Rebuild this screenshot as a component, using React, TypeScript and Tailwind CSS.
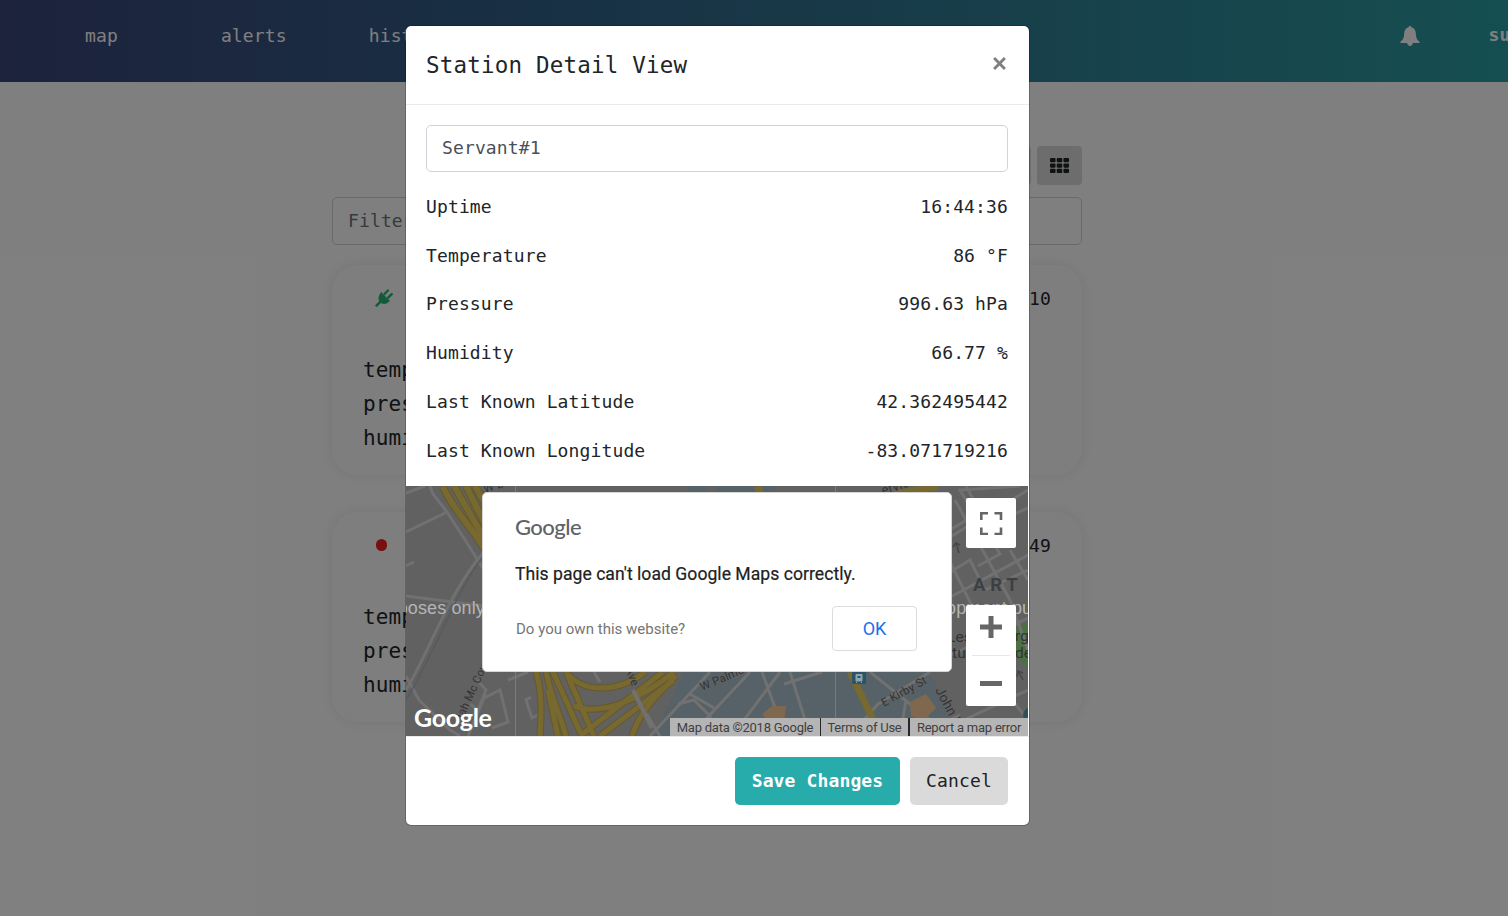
import React from "react";
import { FaTh, FaListUl } from "react-icons/fa";

const readings: [string, string][] = [
  ["Uptime", "16:44:36"],
  ["Temperature", "86 °F"],
  ["Pressure", "996.63 hPa"],
  ["Humidity", "66.77 %"],
  ["Last Known Latitude", "42.362495442"],
  ["Last Known Longitude", "-83.071719216"],
];

function BellIcon() {
  return (
    <svg className="mt-1 ml-[954px] size-5 shrink-0" viewBox="0 0 20 20" fill="currentColor">
      <path d="M10 0C9 0 8.6.6 8.6 1.3C6 2 4.4 4 4.2 7C4 11 3.5 13.5.6 15.5C.1 16 .3 17 1 17H7.2C7.4 19 8.6 20 10 20S12.6 19 12.8 17H19C19.7 17 19.9 16 19.4 15.5C16.5 13.5 16 11 15.8 7C15.6 4 14 2 11.4 1.3C11.4.6 11 0 10 0Z" />
    </svg>
  );
}

function PlugIcon() {
  return (
    <svg className="size-[18px] text-[#27b575]" viewBox="0 0 18 18" fill="currentColor" stroke="currentColor" strokeLinecap="round">
      <path d="M9.5 5L12.9 1.5M13.2 8.7L16.7 5.2M1.5 16.6L5.5 12.6" strokeWidth="2.4" />
      <path d="M6.3 3.8L14.4 11.9C12.3 14.6 8.6 15 6 13.6C3.4 11.8 3 7.2 6.3 3.8Z" strokeWidth="1" strokeLinejoin="round" />
    </svg>
  );
}

function NavBar() {
  return (
    <nav className="flex h-[82px] items-start bg-linear-to-r from-[#3a457a] via-[#305f88] via-30% to-[#28aaa6] pt-[22px] text-white">
      <span className="ml-[85px] leading-7">map</span>
      <span className="ml-[103px] leading-7">alerts</span>
      <span className="ml-[82px] leading-7">history</span>
      <BellIcon />
      <span className="ml-[69px] leading-[26px] font-bold">superuser</span>
    </nav>
  );
}

function StationCard({ online, time }: { online: boolean; time: string }) {
  return (
    <section className="h-[210px] rounded-[26px] bg-[#fdfdfd] pt-[19px] pr-[31px] pl-[31px] shadow-[0_0_14px_rgba(0,0,0,0.09)]">
      <div className="flex h-7 items-center justify-between">
        <span className="flex w-[42px] justify-center">
          {online ? <PlugIcon /> : <span className="mr-[6px] h-3 w-[11px] rounded-full bg-[#f02020]" />}
        </span>
        <span>{time}</span>
      </div>
      <div className="mt-[41px] text-[21px] leading-[34px]">
        <p>temperature</p>
        <p>pressure</p>
        <p>humidity</p>
      </div>
    </section>
  );
}

function MapDrawing() {
  return (
    <svg className="block h-[250px] w-[622px]" viewBox="406 486 622 250" fill="none">
      <rect x="406" y="486" width="622" height="250" fill="#616161" />
      <path d="M655 736L683 672H928L946 700L952 736ZM688 486L706 486V494H688ZM715 486H775V494H715Z" fill="#566268" />
      <path d="M1010 632L1028 622V670L1016 655Z" fill="#4d7043" />
      <path d="M950 736L975 715L1000 722L1010 736Z" fill="#566268" />
      <g stroke="#717171" strokeWidth="3">
        <path d="M406 493L425 486M406 532L447 512L433 494L430 486M447 512L467 543L484 570M406 566L414 562M406 596L484 606M484 552C450 590 430 650 406 690" />
        <path d="M406 676L419 700L450 730L460 736M468 736L484 698L500 690L508 722L492 728M477 680L486 690L478 710L470 704M508 680L528 672M531 697L526 700L532 718L542 713M594 672L600 682" />
        <path d="M643 708L660 736M650 736L710 672M690 736L750 672M678 704L694 700L710 716V736M690 694L714 708M732 736L780 672M762 672L776 710M790 672L810 736M784 684L822 672M850 736L878 704L930 672M870 672L950 736M906 700L900 736M930 736L1028 690M918 736L960 715" />
        <path d="M945 540L1028 490M945 600L1028 555M945 658L1028 618M955 500L1010 600M944 550L984 630M966 486L998 545M950 530L975 515L960 490L1020 486M1010 550L1028 580M1000 520L1028 508M978 566L1000 554L990 538M944 576L970 560L985 590L1028 570M1010 600L1028 650M990 672L1028 720" />
      </g>
      <path d="M484 555C455 592 437 650 406 700" stroke="#555b61" strokeWidth="1.5" />
      <g strokeLinejoin="round">
        <path d="M443 487C455 512 466 520 484 548M454 486L485 540M466 486L486 526M475 486L486 505" stroke="#66592a" strokeWidth="8" />
        <path d="M443 487C455 512 466 520 484 548M454 486L485 540M466 486L486 526M475 486L486 505" stroke="#786930" strokeWidth="6" />
        <path d="M536 672C543 695 541 718 540 736M546 672C552 700 562 720 566 736M553 672L582 736M566 672L594 736M568 674C585 694 620 692 645 672M574 706C602 717 642 698 674 672M580 736L663 672M600 736L674 680M632 736C640 710 660 692 676 676M558 736L548 690" stroke="#66592a" strokeWidth="7" />
        <path d="M536 672C543 695 541 718 540 736M546 672C552 700 562 720 566 736M553 672L582 736M566 672L594 736M568 674C585 694 620 692 645 672M574 706C602 717 642 698 674 672M580 736L663 672M600 736L674 680M632 736C640 710 660 692 676 676M558 736L548 690" stroke="#786930" strokeWidth="5" />
        <path d="M757 486L762 496M850 672L881 736M886 496L938 486" stroke="#786930" strokeWidth="7" />
      </g>
      <path d="M633 690L652 728" stroke="#717171" strokeWidth="4" />
      <path d="M772 706L786 706L784 724L774 730L762 714ZM910 702L926 694L936 708L922 722L911 716Z" fill="#80684e" />
      <path d="M515.5 486V736M835.5 486V736" stroke="#7b7b7b" />
      <g fill="#333" stroke="#656565" strokeWidth="1" paintOrder="stroke" fontFamily="Roboto, sans-serif" fontSize="11.5">
        <text transform="translate(485 493) rotate(-18)">W Boston</text>
        <text transform="translate(883 495) rotate(-18)" fontSize="13">ervice</text>
        <text transform="translate(463 719) rotate(-65)">iah Mc Coy Dr</text>
        <text transform="translate(625 669) rotate(68)">Ave</text>
        <text transform="translate(702 691) rotate(-23)">W Palmer</text>
        <text transform="translate(884 707) rotate(-29)">E Kirby St</text>
        <text transform="translate(935 690) rotate(62)" fontSize="13.5">John R St</text>
        <text x="947" y="642" fontSize="15.5" strokeWidth="0">Leslie</text>
        <text x="952" y="658" fontSize="15.5" strokeWidth="0">tude</text>
        <text x="1015" y="641" fontSize="15.5" strokeWidth="0">rge</text>
        <text x="1015" y="658" fontSize="15.5" strokeWidth="0">de</text>
        <text x="973" y="590.5" fontSize="18.5" fontWeight="700" letterSpacing="4.8" fill="#3c4045">ART</text>
      </g>
      <g fill="#b5b5b5" fontFamily="'Liberation Sans', sans-serif" fontSize="18">
        <text x="485" y="614" textAnchor="end">purposes only</text>
        <text x="946" y="614">opment purposes</text>
      </g>
      <path d="M959 553L956 543M953 547L956 543L960 545M1023 680L1018 671M1017 677L1018 671L1023 673" stroke="#464646" strokeWidth="1.5" />
      <rect x="852" y="671" width="14" height="13" rx="1" fill="#2b5566" />
      <path d="M856 674.5H862V681H856ZM857 682L856 683M861 682L862 683" fill="#8ca5ae" stroke="#8ca5ae" />
      <path d="M857.5 676H860.5V678H857.5Z" fill="#2b5566" />
      <circle cx="1030" cy="715" r="7" fill="#2b5357" />
      <text x="805" y="739" fill="#50565a" fontFamily="Roboto, sans-serif" fontWeight="500" fontSize="19">Wayne State</text>
    </svg>
  );
}

function MapDialog() {
  return (
    <div className="absolute top-[6px] left-[76px] h-[180px] w-[470px] rounded-[5px] border border-[#d5d5d5] bg-white px-8 font-['Roboto',sans-serif] tracking-normal">
      <p className="mt-5 font-['Lato',sans-serif] text-[22px] leading-7 font-medium tracking-[-0.55px] text-[#5f6368]">Google</p>
      <p className="mt-[21px] text-[17.6px] leading-6 tracking-[0.02px] whitespace-nowrap text-[#212121] [-webkit-text-stroke:0.2px_#212121]">
        This page can't load Google Maps correctly.
      </p>
      <div className="mt-5 flex items-center justify-between">
        <span className="mt-[2px] ml-px text-[15px] tracking-[0.02px] text-[#757575]">Do you own this website?</span>
        <button className="mr-[2px] h-[45px] w-[85px] rounded-[4px] border border-[#dadce0] text-[18px] text-[#1a73e8]">OK</button>
      </div>
    </div>
  );
}

function StationMap() {
  return (
    <div className="relative mt-[11px] h-[250px] w-[622px] overflow-hidden">
      <MapDrawing />
      <span className="absolute bottom-px left-2 font-['Lato',sans-serif] text-[25px] leading-[36px] font-bold tracking-[-0.3px] text-white">Google</span>
      <div className="absolute right-0 bottom-0 flex h-[18px] gap-px bg-[#25282b] font-['Roboto',sans-serif] text-[13px] leading-[19px] tracking-[-0.24px] whitespace-nowrap text-[#3f3f3f]">
        <span className="w-[150px] bg-[#bdbdbd]/95 text-center">Map data ©2018 Google</span>
        <span className="w-[87px] bg-[#bdbdbd]/95 text-center">Terms of Use</span>
        <span className="ml-px w-[118px] bg-[#bdbdbd]/95 text-center">Report a map error</span>
      </div>
      <div className="absolute top-3 right-3 flex size-[50px] items-center justify-center rounded-[2px] bg-white">
        <svg className="h-6 w-6 text-[#666]" viewBox="0 0 24 24" fill="none" stroke="currentColor" strokeWidth="2.6">
          <path d="M2.3 9V2.3H9M15.5 2.3H22V9M22 16.5V23H15.5M9 23H2.3V16.5" />
        </svg>
      </div>
      <div className="absolute top-[119px] right-3 flex h-[101px] w-[50px] flex-col items-center rounded-[2px] bg-white text-[#666]">
        <svg className="mt-[11px] size-[22px]" viewBox="0 0 22 22" stroke="currentColor" strokeWidth="5">
          <path d="M0 11H22M11 0V22" />
        </svg>
        <hr className="mt-[17px] w-[38px] border-[#e6e6e6]" />
        <svg className="mt-[25px] h-[5px] w-[22px]" viewBox="0 0 22 5">
          <path d="M0 0H22V5H0Z" fill="currentColor" />
        </svg>
      </div>
      <MapDialog />
    </div>
  );
}

export default function App() {
  return (
    <div className="relative h-[916px] w-full overflow-hidden bg-white font-['DejaVu_Sans_Mono',monospace] text-[18px] tracking-[0.13px] text-[#212529]">
      <div className="w-[1700px]">
        <NavBar />
        <main className="ml-[332px] flex w-[750px] flex-col pt-16">
          <div className="flex justify-end gap-[6px]">
            <span className="flex h-[39px] w-[45px] items-center justify-center rounded-[4px] bg-[#dadada]">
              <FaListUl className="size-[18px]" />
            </span>
            <span className="flex h-[39px] w-[45px] items-center justify-center rounded-[4px] bg-[#dadada]">
              <FaTh className="h-[17px] w-[19px]" preserveAspectRatio="none" />
            </span>
          </div>
          <div className="mt-3 flex h-12 items-center rounded-[5px] border border-[#ced4da] px-[15px] pb-[2px] text-[#6c757d]">Filter stations</div>
          <div className="mt-5 flex flex-col gap-[37px]">
            <StationCard online time="16:44:10" />
            <StationCard online={false} time="16:43:49" />
          </div>
        </main>
      </div>

      <div className="absolute inset-0 bg-black/50 pt-[25px] pl-[405px]">
        <div className="w-[625px] rounded-[6px] border border-black/20 bg-white bg-clip-padding">
          <header className="flex h-[79px] justify-between border-b border-[#e9ecef] pr-[21px] pl-5">
            <h1 className="pt-5 text-[22.5px] leading-[38px] tracking-[0.2px]">Station Detail View</h1>
            <button className="flex h-[74px] w-[17px] items-center justify-center" aria-label="Close">
              <svg className="size-[13px]" viewBox="0 0 12 12" stroke="#7f7f7f" strokeWidth="2.6">
                <path d="M1 1L11 11M11 1L1 11" />
              </svg>
            </button>
          </header>
          <div className="pt-5 pr-[21px] pl-5">
            <div className="flex h-[47px] items-center rounded-[5px] border border-[#ced4da] px-[15px] pb-[2px] text-[#495057]">Servant#1</div>
            <dl className="pt-[10px]">
              {readings.map(([label, value]) => (
                <div key={label} className="flex h-[48.8px] items-center justify-between">
                  <dt>{label}</dt>
                  <dd>{value}</dd>
                </div>
              ))}
            </dl>
          </div>
          <StationMap />
          <footer className="flex h-[89px] justify-end gap-[10px] border-t border-[#e9ecef] pt-5 pr-[21px] pl-5">
            <button className="h-12 w-[165px] rounded-[5px] bg-[#27abab] font-bold text-white">Save Changes</button>
            <button className="h-12 w-[98px] rounded-[5px] bg-[#dadada] text-[#212121]">Cancel</button>
          </footer>
        </div>
      </div>
    </div>
  );
}
